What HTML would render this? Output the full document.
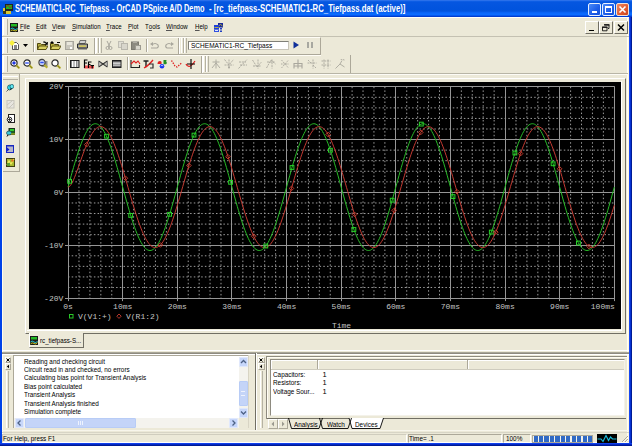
<!DOCTYPE html>
<html><head><meta charset="utf-8">
<style>
*{margin:0;padding:0;box-sizing:border-box}
html,body{width:632px;height:446px;overflow:hidden;background:#ECE9D8;font-family:"Liberation Sans",sans-serif;position:relative}
.a{position:absolute}
.t{position:absolute;white-space:nowrap;font-size:7.6px;color:#000;line-height:1;transform-origin:0 0}
#title{left:0;top:0;width:632px;height:17px;background:linear-gradient(#2A70EA 0px,#2A70EA 1px,#1060E6 1px,#0556E0 2.5px,#0053DD 11px,#0862F4 12.5px,#0A6CFF 14px,#0A6AFF 15px,#0046DC 16px,#0034C4 17px)}
.tt{top:4px;color:#fff;font-weight:bold;font-size:10px}
.bdr{background:#0A4DE6}
.gv{position:absolute;width:3px;border-left:1px solid #fff;border-right:1px solid #B5B2A3}
.gr{position:absolute;width:5px;border-left:1px solid #fff;border-right:1px solid #B5B2A3;background:#F2F0E6}
.gr2{position:absolute;width:6px;background:linear-gradient(90deg,#fff 0 1px,#ECE9D8 1px 2px,#B5B2A3 2px 3px,#fff 3px 4px,#ECE9D8 4px 5px,#B5B2A3 5px 6px)}
.sv{position:absolute;width:2px;border-left:1px solid #ACA899;border-right:1px solid #fff}
.eh{position:absolute;height:2px;border-top:1px solid #ACA899;border-bottom:1px solid #fff}
.btn{position:absolute;border-top:1px solid #fff;border-left:1px solid #fff;border-right:1px solid #716F64;border-bottom:1px solid #716F64;background:#ECE9D8}
.sunk{position:absolute;border-top:1px solid #ACA899;border-left:1px solid #ACA899;border-right:1px solid #fff;border-bottom:1px solid #fff}
.ic{position:absolute}
.menu .t{top:22.6px;font-size:8px;transform:scaleX(0.765)}
.menu u{text-decoration:none;border-bottom:1px solid #555;display:inline-block;line-height:7.6px}
svg text{font-family:"Liberation Mono",monospace;font-size:8px;fill:#C4C4C4}
svg .d{stroke:#9C9C9C;stroke-width:1;stroke-dasharray:1.5 2.2}
svg .s{stroke:#969696;stroke-width:1}
</style></head><body>
<!-- ===== TITLE ===== -->
<div id="title" class="a"></div>
<svg class="ic" style="left:3px;top:4px" width="10" height="10" viewBox="0 0 10 10">
<rect x="0" y="4" width="8" height="6" fill="#D8C830"/><rect x="2" y="0" width="8" height="7" fill="#222"/><rect x="3" y="1" width="6" height="4" fill="#20B020"/><path d="M3,3 L5,1 L7,4 L9,2" stroke="#B02020" fill="none" stroke-width="0.8"/><rect x="0" y="7" width="3" height="3" fill="#3a3a10"/>
</svg>
<div class="t tt" style="left:14.5px;transform:scaleX(0.737)">SCHEMATIC1-RC_Tiefpass</div>
<div class="t tt" style="left:111.7px;transform:scaleX(0.735)">- OrCAD PSpice A/D Demo</div>
<div class="t tt" style="left:209px;transform:scaleX(0.778)">- [rc_tiefpass-SCHEMATIC1-RC_Tiefpass.dat (active)]</div>
<!-- caption buttons -->
<div class="a" style="left:588px;top:3px;width:12.5px;height:12.5px;border:1px solid #E8F0FF;border-radius:2px;background:linear-gradient(135deg,#4A8AF8,#1C5CE8 60%,#1650D8)"></div>
<div class="a" style="left:591.5px;top:10.5px;width:5px;height:2px;background:#fff"></div>
<div class="a" style="left:602px;top:3px;width:12.5px;height:12.5px;border:1px solid #E8F0FF;border-radius:2px;background:linear-gradient(135deg,#4A8AF8,#1C5CE8 60%,#1650D8)"></div>
<div class="a" style="left:605px;top:6px;width:6.5px;height:6.5px;border:1px solid #fff;border-top-width:2px"></div>
<div class="a" style="left:616px;top:3px;width:12.5px;height:12.5px;border:1px solid #F0E0D8;border-radius:2px;background:linear-gradient(135deg,#F08860,#E05A30 60%,#C84820)"></div>
<svg class="ic" style="left:616px;top:3px" width="13" height="13" viewBox="0 0 13 13"><path d="M3.5,3.5 L9.5,9.5 M9.5,3.5 L3.5,9.5" stroke="#fff" stroke-width="1.6"/></svg>

<!-- window borders -->
<div class="a" style="left:0;top:17px;width:2px;height:429px;background:#0042E8"></div>
<div class="a" style="left:629px;top:17px;width:3px;height:429px;background:linear-gradient(90deg,#1848F2 0 1px,#0632D4 1px 2px,#001A94 2px 3px)"></div>
<div class="a" style="left:0;top:443px;width:632px;height:3px;background:linear-gradient(#1040EC 0 1px,#0428C0 1px 2px,#001A94 2px 3px)"></div>

<div class="a" style="left:627px;top:17px;width:2px;height:426px;background:linear-gradient(90deg,#FFFFF4 0 1px,#FFF4DA 1px 2px)"></div>
<div class="a" style="left:2px;top:17px;width:1px;height:426px;background:#FFFCEE"></div>
<!-- ===== MENU BAND ===== -->
<div class="a" style="left:2px;top:17px;width:627px;height:1px;background:#FFFFF8"></div>
<div class="gr" style="left:3px;top:19px;height:16px"></div>
<svg class="ic" style="left:10px;top:22.5px" width="8" height="9" viewBox="0 0 8 9">
<rect width="8" height="9" fill="#1a1a1a"/><rect x="1" y="1" width="6" height="2.5" fill="#22B822"/><path d="M0.5,6 Q2,4 4,6 T7.5,5" stroke="#20C8D8" fill="none" stroke-width="1"/><path d="M0.5,8 Q2,6 4,7.5 T7.5,6.5" stroke="#D8D020" fill="none" stroke-width="0.9"/>
</svg>
<div class="menu">
<div class="t" style="left:20px"><u>F</u>ile</div>
<div class="t" style="left:35.7px"><u>E</u>dit</div>
<div class="t" style="left:52px"><u>V</u>iew</div>
<div class="t" style="left:72px"><u>S</u>imulation</div>
<div class="t" style="left:106px"><u>T</u>race</div>
<div class="t" style="left:128px"><u>P</u>lot</div>
<div class="t" style="left:145px">T<u>o</u>ols</div>
<div class="t" style="left:166px"><u>W</u>indow</div>
<div class="t" style="left:195px"><u>H</u>elp</div>
</div>
<svg class="ic" style="left:214px;top:22.5px" width="9" height="9" viewBox="0 0 9 9"><rect x="4" y="0" width="5" height="4.5" fill="#1A2A9A"/><path d="M4.5,3 q2,-3 4,0" stroke="#D8D020" fill="none" stroke-width="0.8"/><rect x="0" y="2" width="5" height="4.5" fill="#2040D8"/><path d="M0.5,4.5 h4" stroke="#D8D020" stroke-width="0.8"/><rect x="0" y="6.5" width="5" height="2.5" fill="#3050E0"/><rect x="1" y="7" width="3" height="1" fill="#E0E8FF"/><rect x="6" y="5" width="2" height="1.5" fill="#2040C0"/><rect x="6" y="7.5" width="2" height="1.5" fill="#2040C0"/></svg>
<!-- MDI buttons -->
<div class="btn" style="left:585px;top:21px;width:13.5px;height:12.5px"></div>
<div class="a" style="left:588.5px;top:29.5px;width:5px;height:1.5px;background:#000"></div>
<div class="btn" style="left:599px;top:21px;width:13.5px;height:12.5px"></div>
<svg class="ic" style="left:599px;top:21px" width="14" height="13" viewBox="0 0 14 13"><path d="M5.5,4 h4.5 v3.5 h-1" stroke="#111" fill="none" stroke-width="0.9"/><rect x="5" y="3.2" width="5.5" height="1.2" fill="#111"/><path d="M3.5,6.2 h4.5 v3.6 h-4.5 z" stroke="#111" fill="#ECE9D8" stroke-width="0.9"/><rect x="3" y="5.6" width="5.5" height="1.2" fill="#111"/></svg>
<div class="btn" style="left:613.5px;top:21px;width:14px;height:12.5px"></div>
<svg class="ic" style="left:613.5px;top:21px" width="14" height="13" viewBox="0 0 14 13"><path d="M4,3.5 L10,9.5 M10,3.5 L4,9.5" stroke="#000" stroke-width="1.5"/></svg>
<div class="a" style="left:2px;top:36px;width:627px;height:1px;background:#C4C1B2"></div>

<!-- ===== TOOLBAR ROW 1 ===== -->
<div class="a" style="left:2px;top:37px;width:319px;height:18px;border-top:1px solid #FFFDF6;border-right:1px solid #ACA899;border-bottom:1px solid #ACA899"></div>
<div class="a" style="left:2px;top:55px;width:319px;height:1px;background:#FFFDF6"></div>
<div class="gr" style="left:3px;top:38px;height:15px"></div>
<div class="sv" style="left:33px;top:39px;height:13px"></div>
<div class="sv" style="left:146px;top:39px;height:13px"></div>
<div class="a" style="left:94px;top:38px;width:1px;height:16px;background:#ACA899"></div>
<div class="a" style="left:95px;top:38px;width:1px;height:16px;background:#fff"></div>
<div class="gr2" style="left:96px;top:38px;height:15px"></div>
<div class="a" style="left:178px;top:38px;width:1px;height:16px;background:#ACA899"></div>
<div class="a" style="left:179px;top:38px;width:1px;height:16px;background:#fff"></div>
<div class="gr2" style="left:181px;top:38px;height:15px"></div>
<div class="a" style="left:188px;top:40.5px;width:101px;height:9px;background:#fff;border:1px solid #C8C5B8;border-top-color:#808078;border-left-color:#808078"></div>
<div class="t" style="left:191.4px;top:41.8px;font-size:7.5px;transform:scaleX(0.87)">SCHEMATIC1-RC_Tiefpass</div>
<svg class="ic" style="left:293px;top:41px" width="7" height="8" viewBox="0 0 7 8"><path d="M0.5,0.5 L6,4 L0.5,7.5 Z" fill="#10309A"/></svg>
<div class="a" style="left:307px;top:41.5px;width:2px;height:6px;background:#A8A8A0"></div>
<div class="a" style="left:311px;top:41.5px;width:2px;height:6px;background:#A8A8A0"></div>

<!-- ===== TOOLBAR ROW 2 ===== -->
<div class="a" style="left:2px;top:55px;width:349px;height:19px;border-right:1px solid #ACA899;border-bottom:1px solid #ACA899"></div>
<div class="gr" style="left:3px;top:56px;height:16px"></div>
<div class="sv" style="left:66px;top:57px;height:13px"></div>
<div class="sv" style="left:127px;top:57px;height:13px"></div>
<div class="a" style="left:201px;top:56px;width:1px;height:17px;background:#ACA899"></div>
<div class="a" style="left:202px;top:56px;width:1px;height:17px;background:#fff"></div>
<div class="gr2" style="left:203px;top:56px;height:16px"></div>
<svg class="ic" style="left:9px;top:40px" width="10" height="10" viewBox="0 0 10 10"><path d="M3.5,2.5 h4 l2,2 v5 h-6 z" fill="#fff" stroke="#555" stroke-width="1"/><rect x="5" y="5" width="3" height="4" fill="#888"/><circle cx="3" cy="3" r="2.2" fill="#F8F040"/><path d="M3,0 v6 M0,3 h6" stroke="#F8F040" stroke-width="0.8"/></svg>
<svg class="ic" style="left:23px;top:44px" width="5" height="3" viewBox="0 0 5 3"><path d="M0,0 h5 l-2.5,3 z" fill="#000"/></svg>
<svg class="ic" style="left:37px;top:41px" width="11" height="9" viewBox="0 0 11 9"><path d="M0.5,2.5 h3 l1,1 h4 v5 h-8 z" fill="#B8B040" stroke="#504810" stroke-width="1"/><path d="M2,5 h9 l-2,3.5 h-8.5 z" fill="#D8D060" stroke="#504810" stroke-width="0.9"/><path d="M6,1 q2,-1 3.5,1 l1,-1 v2.5 h-2.5 l1,-1" fill="#000" stroke="#000" stroke-width="0.6"/></svg>
<svg class="ic" style="left:50px;top:41px" width="11" height="9" viewBox="0 0 11 9"><path d="M0.5,2.5 h3 l1,1 h4 v5 h-8 z" fill="#B8B040" stroke="#504810" stroke-width="1"/><path d="M2,5 h9 l-2,3.5 h-8.5 z" fill="#D8D060" stroke="#504810" stroke-width="0.9"/><path d="M2,0 v3 M0.5,1.5 h3" stroke="#000" stroke-width="1"/><path d="M7,1.5 h3" stroke="#000" stroke-width="1"/></svg>
<svg class="ic" style="left:65px;top:41px" width="9" height="9" viewBox="0 0 9 9"><rect x="0.5" y="0.5" width="8" height="8" fill="#C8C6BC" stroke="#A8A69C"/><rect x="2" y="1" width="5" height="3" fill="#E8E6DC"/><rect x="5" y="6" width="2" height="2" fill="#fff"/></svg>
<svg class="ic" style="left:77px;top:40px" width="11" height="10" viewBox="0 0 11 10"><path d="M3,0.5 h6 l-1,3 h-6 z" fill="#D0D0D0" stroke="#555" stroke-width="0.8"/><path d="M0.5,4 h10 v4 h-10 z" fill="#A0A0A0" stroke="#303030" stroke-width="1"/><rect x="2" y="5.5" width="7" height="1.2" fill="#E0D040"/><rect x="1" y="8" width="9" height="1.5" fill="#606060"/></svg>
<svg class="ic" style="left:105px;top:41px" width="8" height="9" viewBox="0 0 8 9"><path d="M2,0 L5,6 M6,0 L3,6" stroke="#A8A69C" stroke-width="1"/><circle cx="2.5" cy="7" r="1.5" fill="none" stroke="#A8A69C"/><circle cx="5.5" cy="7" r="1.5" fill="none" stroke="#A8A69C"/></svg>
<svg class="ic" style="left:118px;top:41px" width="10" height="9" viewBox="0 0 10 9"><rect x="0.5" y="0.5" width="5" height="6" fill="#E0DED4" stroke="#C0BEB4"/><rect x="3.5" y="2.5" width="6" height="6" fill="#D8D6CC" stroke="#B8B6AC"/></svg>
<svg class="ic" style="left:131px;top:41px" width="10" height="9" viewBox="0 0 10 9"><rect x="0.5" y="1" width="7" height="7.5" fill="#8C8A80" stroke="#7C7A70"/><rect x="2" y="0" width="4" height="2" fill="#B0AEA4"/><rect x="4.5" y="4.5" width="5" height="4.5" fill="#D8D6CC" stroke="#9C9A90"/></svg>
<svg class="ic" style="left:150px;top:42px" width="10" height="7" viewBox="0 0 10 7"><path d="M2,3 q3,-3 6,0 q1,2 -1,3 h-6" fill="none" stroke="#A8A69C" stroke-width="1.1"/><path d="M0,2 l3,-2 v4 z" fill="#A8A69C"/></svg>
<svg class="ic" style="left:164px;top:42px" width="10" height="7" viewBox="0 0 10 7"><path d="M8,3 q-3,-3 -6,0 q-1,2 1,3 h6" fill="none" stroke="#A8A69C" stroke-width="1.1"/><path d="M10,2 l-3,-2 v4 z" fill="#A8A69C"/></svg>
<svg class="ic" style="left:9.6px;top:59.1px" width="11" height="11" viewBox="0 0 11 11"><circle cx="4" cy="4" r="3.1" fill="#fff" stroke="#2A2A2A" stroke-width="1.2"/><path d="M2.3,4 h3.4 M4,2.3 v3.4" stroke="#1028E0" stroke-width="1.3"/><path d="M6.3,6.3 L9.3,9.3" stroke="#B8B030" stroke-width="2.2"/><path d="M6.6,6.6 L9.3,9.3" stroke="#606010" stroke-width="0.5"/></svg>
<svg class="ic" style="left:23.4px;top:59.1px" width="11" height="11" viewBox="0 0 11 11"><circle cx="4" cy="4" r="3.1" fill="#fff" stroke="#2A2A2A" stroke-width="1.2"/><path d="M2.2,4 h3.6" stroke="#3050F0" stroke-width="1.4"/><path d="M6.3,6.3 L9.3,9.3" stroke="#B8B030" stroke-width="2.2"/><path d="M6.6,6.6 L9.3,9.3" stroke="#606010" stroke-width="0.5"/></svg>
<svg class="ic" style="left:38px;top:58px" width="10" height="11" viewBox="0 0 10 11"><rect x="3.5" y="3" width="6" height="6" fill="#909090"/><circle cx="4" cy="4.5" r="3.1" fill="#C0CCF8" stroke="#404040" stroke-width="1.1"/><path d="M2.3,4.5 h3.4" stroke="#3050F0" stroke-width="1.3"/><path d="M6.3,6.8 L9.3,9.8" stroke="#B8B030" stroke-width="2.2"/></svg>
<svg class="ic" style="left:50.9px;top:59px" width="11" height="11" viewBox="0 0 11 11"><circle cx="4" cy="4" r="3.1" fill="#fff" stroke="#2A2A2A" stroke-width="1.2"/><path d="M6.3,6.3 L9.3,9.3" stroke="#B8B030" stroke-width="2.2"/><path d="M6.6,6.6 L9.3,9.3" stroke="#606010" stroke-width="0.5"/></svg>
<svg class="ic" style="left:70px;top:60px" width="10" height="8" viewBox="0 0 10 8"><rect x="0.5" y="0.5" width="8.5" height="7" fill="#808080" stroke="#202020"/><rect x="2" y="1" width="1.5" height="6" fill="#fff"/><rect x="4.5" y="1" width="1.5" height="6" fill="#fff"/><rect x="6.8" y="1" width="1.5" height="6" fill="#C0C0C0"/></svg>
<svg class="ic" style="left:83px;top:59px" width="11" height="10" viewBox="0 0 11 10"><rect x="1" y="6.5" width="10" height="3" fill="#F05050"/><path d="M1.5,9 v-8 h3 M1.5,4 h2.5 M5.5,9 v-6 h3 M5.5,5.5 h2 M7.5,6.5 h3.5 M9.2,6.5 v3" stroke="#000" stroke-width="1.2" fill="none"/></svg>
<svg class="ic" style="left:98px;top:60px" width="10" height="8" viewBox="0 0 10 8"><path d="M0.5,1 L9.5,7 M0.5,7 L9.5,1" stroke="#303030" stroke-width="1.2"/><path d="M0.5,2 v4 M9.5,2 v4" stroke="#808080" stroke-width="1.5"/><path d="M2,2.5 v3 M8,2.5 v3" stroke="#A0A0A0" stroke-width="1"/></svg>
<svg class="ic" style="left:112px;top:60px" width="10" height="8" viewBox="0 0 10 8"><rect x="0.5" y="0.5" width="8.5" height="7" fill="#606060" stroke="#202020"/><rect x="1" y="2.5" width="7.5" height="1.2" fill="#fff"/><rect x="1" y="4.5" width="7.5" height="1.2" fill="#E0E0E0"/></svg>
<svg class="ic" style="left:130px;top:59px" width="11" height="10" viewBox="0 0 11 10"><path d="M1,9 V1 M1,8.5 h9 M9.5,9 v-3" stroke="#202020" stroke-width="1.1" fill="none"/><path d="M1,5 L4,2 L6,4 L8,2 L10,5" stroke="#E02020" stroke-width="1.1" fill="none"/></svg>
<svg class="ic" style="left:143px;top:59px" width="11" height="10" viewBox="0 0 11 10"><path d="M0.5,2 h5 M3,2 v6" stroke="#202020" stroke-width="1.4"/><path d="M1,9 Q5,7 10,1" stroke="#E02020" stroke-width="1.3" fill="none"/><path d="M6,5 h4 v4 h-3" stroke="#303030" stroke-width="1.2" fill="none"/></svg>
<svg class="ic" style="left:157px;top:59px" width="11" height="10" viewBox="0 0 11 10"><circle cx="5" cy="7.3" r="2.3" fill="#1030F0"/><path d="M4,7.3 a1,1 0 1,1 2,0" stroke="#fff" stroke-width="0.7" fill="none"/><path d="M0.5,5 q0,-3 2.5,-3 q2,0 1.5,3 z" fill="#E02020"/><path d="M6.5,1 h2.5 q1.5,0.5 0,2 q1.8,0.5 0,2.3 h-2.5 z" fill="#209020"/></svg>
<svg class="ic" style="left:171px;top:60px" width="11" height="8" viewBox="0 0 11 8"><path d="M0.5,0.5 L4,6 L6,7 L10.5,3" stroke="#E02020" stroke-width="1.3" fill="none" stroke-dasharray="1.4 1.2"/></svg>
<svg class="ic" style="left:185px;top:59px" width="11" height="10" viewBox="0 0 11 10"><path d="M1,5 Q4,11 10,2" stroke="#E02020" stroke-width="1.3" fill="none"/><path d="M6,0 v10 M2,5 h8" stroke="#000" stroke-width="1.1"/></svg>
<svg class="ic" style="left:210.5px;top:59px" width="10" height="10" viewBox="0 0 10 10"><path d="M5,0.5 v9 M1.5,3 h7 M5,4 L1,9 M5,4 L9,9" stroke="#A9A79D" stroke-width="0.9" fill="none"/></svg>
<svg class="ic" style="left:224.3px;top:59px" width="10" height="10" viewBox="0 0 10 10"><path d="M0.5,0.5 L5,6 L9.5,0.5 M5,0.5 v8 M0.5,6 h9" stroke="#A9A79D" stroke-width="0.9" fill="none" stroke-dasharray="2 0.8"/><circle cx="5" cy="8.5" r="1" fill="#A9A79D"/></svg>
<svg class="ic" style="left:238.1px;top:59px" width="10" height="10" viewBox="0 0 10 10"><path d="M0.5,9.5 L9,0.5 M1,3 h7 M2,6 h7" stroke="#A9A79D" stroke-width="0.9" fill="none" stroke-dasharray="2.2 0.8"/></svg>
<svg class="ic" style="left:251.9px;top:59px" width="10" height="10" viewBox="0 0 10 10"><path d="M0.5,1 L5,8 L9.5,3 M6,0.5 v9 M1,7 h8" stroke="#A9A79D" stroke-width="0.9" fill="none" stroke-dasharray="2 0.8"/></svg>
<svg class="ic" style="left:265.7px;top:59px" width="10" height="10" viewBox="0 0 10 10"><path d="M0.5,9 L5,1 L9.5,5 M6,0.5 v9 M1,3 h8" stroke="#A9A79D" stroke-width="0.9" fill="none" stroke-dasharray="2 0.8"/></svg>
<svg class="ic" style="left:279.5px;top:59px" width="10" height="10" viewBox="0 0 10 10"><path d="M1.5,1 L8.5,9 M1.5,9 L8.5,1 M1,5 h8" stroke="#A9A79D" stroke-width="0.9" fill="none" stroke-dasharray="1.5 1"/></svg>
<svg class="ic" style="left:293.3px;top:59px" width="10" height="10" viewBox="0 0 10 10"><path d="M1,9.5 v-5 h8 v5 M5,0.5 v9 M1,7 h8" stroke="#A9A79D" stroke-width="1.1" fill="none"/></svg>
<svg class="ic" style="left:307.1px;top:59px" width="10" height="10" viewBox="0 0 10 10"><path d="M0.5,4 h9 M6,0.5 v9 M1,1 L4,4 M9,9 L6,6" stroke="#A9A79D" stroke-width="0.9" fill="none" stroke-dasharray="2 0.8"/></svg>
<svg class="ic" style="left:320.9px;top:59px" width="10" height="10" viewBox="0 0 10 10"><path d="M0.5,2 h9 M0.5,6 h9 M3,0.5 v9 M7,0.5 v9" stroke="#A9A79D" stroke-width="0.9" fill="none" stroke-dasharray="2 0.8"/></svg>
<svg class="ic" style="left:334.7px;top:59px" width="10" height="10" viewBox="0 0 10 10"><path d="M0.5,9.5 L5,5 L9.5,8 M5,5 L7,1.5 M6,1 a1.5,1.5 0 1,1 3,0.5" stroke="#A9A79D" stroke-width="0.9" fill="none"/></svg>
<svg class="ic" style="left:6px;top:84px" width="8" height="8" viewBox="0 0 8 8"><ellipse cx="3.5" cy="3.5" rx="2" ry="2.5" fill="#30D8E8" stroke="#105060" stroke-width="0.7"/><ellipse cx="5.8" cy="2.5" rx="1.8" ry="2.2" fill="#60E8F0" stroke="#105060" stroke-width="0.7"/><path d="M4,5 L6,4 L5,6 z" fill="#000"/><path d="M3,5 L0.5,7.5" stroke="#404040" stroke-width="0.8"/></svg>
<svg class="ic" style="left:5.5px;top:100px" width="9" height="9" viewBox="0 0 9 9"><rect x="1" y="0.5" width="7" height="7.5" fill="#E8E6E0" stroke="#C8C6BC"/><path d="M1,5 L6,1 M3,8 L8,3" stroke="#C8C6BC"/></svg>
<svg class="ic" style="left:5.5px;top:113.5px" width="9" height="9" viewBox="0 0 9 9"><rect x="2.5" y="0.5" width="6" height="8" fill="#fff" stroke="#202020"/><circle cx="3.5" cy="5.5" r="2.3" fill="#fff" stroke="#202020" stroke-width="1"/><path d="M3.5,4 v3 M2,5.5 h3" stroke="#202020" stroke-width="0.8"/></svg>
<svg class="ic" style="left:5.5px;top:128px" width="9" height="9" viewBox="0 0 9 9"><rect x="3" y="0.5" width="6" height="6" fill="#206020" stroke="#203020"/><rect x="4" y="1" width="4" height="2" fill="#30D030"/><ellipse cx="3" cy="5" rx="2.5" ry="2" fill="#40C8D8" stroke="#104050" stroke-width="0.7"/><path d="M5,6 h4" stroke="#D0D020" stroke-width="1"/><path d="M2,7 L1,8.5" stroke="#000"/></svg>
<svg class="ic" style="left:6px;top:145px" width="8" height="8" viewBox="0 0 8 8"><rect x="0.5" y="0.5" width="7" height="7" fill="#B8B8C8" stroke="#1828C0" stroke-width="1"/><rect x="0" y="0" width="8" height="1.5" fill="#1828C0"/><path d="M0.5,2 L3.5,4.5 L0.5,7 z" fill="#1020D0"/></svg>
<svg class="ic" style="left:5.5px;top:158px" width="9" height="9" viewBox="0 0 9 9"><rect x="0.5" y="0.5" width="8" height="8" fill="#A8B830" stroke="#404010"/><path d="M1,7 L3,3 L5,6 L8,1" stroke="#F0F060" stroke-width="1.2" fill="none"/><circle cx="6.5" cy="2.5" r="1.2" fill="#E07020"/><rect x="1" y="5" width="3" height="3" fill="#60A030"/></svg>
<!-- ===== LEFT TOOLBAR ===== -->
<div class="a" style="left:3px;top:74px;width:17px;height:98px;border-right:1px solid #ACA899;border-bottom:1px solid #ACA899"></div>
<div class="a" style="left:3px;top:76px;width:15px;height:4px;border-top:1px solid #fff;border-bottom:1px solid #B5B2A3"></div>

<!-- ===== MDI CHILD FRAME ===== -->
<div class="a" style="left:2px;top:73px;width:626px;height:1px;background:#B8B5A6"></div>
<div class="a" style="left:20px;top:74px;width:608px;height:1px;background:#FDFCF6"></div>
<div class="a" style="left:25px;top:78px;width:601px;height:256px;border-top:1px solid #fff;border-left:1px solid #fff;border-right:1px solid #716F64;border-bottom:1px solid #716F64"></div>
<div class="a" style="left:27px;top:81px;width:595px;height:250px;border-right:1px solid #fff;border-bottom:1px solid #fff"></div>
<!-- plot -->
<div class="a" style="left:29px;top:82px;width:592px;height:247px;background:#000"></div>
<svg class="a" style="left:0;top:0" width="632" height="446" viewBox="0 0 632 446">
<clipPath id="pc"><rect x="29" y="82" width="592" height="247"/></clipPath>
<g clip-path="url(#pc)">
<line x1="68.0" y1="287.49" x2="614.3" y2="287.49" class="d"/>
<line x1="68.0" y1="276.93" x2="614.3" y2="276.93" class="d"/>
<line x1="68.0" y1="266.36" x2="614.3" y2="266.36" class="d"/>
<line x1="68.0" y1="255.80" x2="614.3" y2="255.80" class="d"/>
<line x1="68.0" y1="234.66" x2="614.3" y2="234.66" class="d"/>
<line x1="68.0" y1="224.10" x2="614.3" y2="224.10" class="d"/>
<line x1="68.0" y1="213.53" x2="614.3" y2="213.53" class="d"/>
<line x1="68.0" y1="202.97" x2="614.3" y2="202.97" class="d"/>
<line x1="68.0" y1="181.83" x2="614.3" y2="181.83" class="d"/>
<line x1="68.0" y1="171.27" x2="614.3" y2="171.27" class="d"/>
<line x1="68.0" y1="160.70" x2="614.3" y2="160.70" class="d"/>
<line x1="68.0" y1="150.14" x2="614.3" y2="150.14" class="d"/>
<line x1="68.0" y1="129.00" x2="614.3" y2="129.00" class="d"/>
<line x1="68.0" y1="118.44" x2="614.3" y2="118.44" class="d"/>
<line x1="68.0" y1="107.87" x2="614.3" y2="107.87" class="d"/>
<line x1="68.0" y1="97.31" x2="614.3" y2="97.31" class="d"/>
<line x1="78.97" y1="86.7" x2="78.97" y2="298.1" class="d"/>
<line x1="89.90" y1="86.7" x2="89.90" y2="298.1" class="d"/>
<line x1="100.83" y1="86.7" x2="100.83" y2="298.1" class="d"/>
<line x1="111.75" y1="86.7" x2="111.75" y2="298.1" class="d"/>
<line x1="133.60" y1="86.7" x2="133.60" y2="298.1" class="d"/>
<line x1="144.53" y1="86.7" x2="144.53" y2="298.1" class="d"/>
<line x1="155.45" y1="86.7" x2="155.45" y2="298.1" class="d"/>
<line x1="166.38" y1="86.7" x2="166.38" y2="298.1" class="d"/>
<line x1="188.23" y1="86.7" x2="188.23" y2="298.1" class="d"/>
<line x1="199.15" y1="86.7" x2="199.15" y2="298.1" class="d"/>
<line x1="210.07" y1="86.7" x2="210.07" y2="298.1" class="d"/>
<line x1="221.00" y1="86.7" x2="221.00" y2="298.1" class="d"/>
<line x1="242.85" y1="86.7" x2="242.85" y2="298.1" class="d"/>
<line x1="253.78" y1="86.7" x2="253.78" y2="298.1" class="d"/>
<line x1="264.70" y1="86.7" x2="264.70" y2="298.1" class="d"/>
<line x1="275.62" y1="86.7" x2="275.62" y2="298.1" class="d"/>
<line x1="297.48" y1="86.7" x2="297.48" y2="298.1" class="d"/>
<line x1="308.40" y1="86.7" x2="308.40" y2="298.1" class="d"/>
<line x1="319.32" y1="86.7" x2="319.32" y2="298.1" class="d"/>
<line x1="330.25" y1="86.7" x2="330.25" y2="298.1" class="d"/>
<line x1="352.10" y1="86.7" x2="352.10" y2="298.1" class="d"/>
<line x1="363.03" y1="86.7" x2="363.03" y2="298.1" class="d"/>
<line x1="373.95" y1="86.7" x2="373.95" y2="298.1" class="d"/>
<line x1="384.88" y1="86.7" x2="384.88" y2="298.1" class="d"/>
<line x1="406.73" y1="86.7" x2="406.73" y2="298.1" class="d"/>
<line x1="417.65" y1="86.7" x2="417.65" y2="298.1" class="d"/>
<line x1="428.58" y1="86.7" x2="428.58" y2="298.1" class="d"/>
<line x1="439.50" y1="86.7" x2="439.50" y2="298.1" class="d"/>
<line x1="461.35" y1="86.7" x2="461.35" y2="298.1" class="d"/>
<line x1="472.28" y1="86.7" x2="472.28" y2="298.1" class="d"/>
<line x1="483.20" y1="86.7" x2="483.20" y2="298.1" class="d"/>
<line x1="494.13" y1="86.7" x2="494.13" y2="298.1" class="d"/>
<line x1="515.98" y1="86.7" x2="515.98" y2="298.1" class="d"/>
<line x1="526.90" y1="86.7" x2="526.90" y2="298.1" class="d"/>
<line x1="537.83" y1="86.7" x2="537.83" y2="298.1" class="d"/>
<line x1="548.75" y1="86.7" x2="548.75" y2="298.1" class="d"/>
<line x1="570.60" y1="86.7" x2="570.60" y2="298.1" class="d"/>
<line x1="581.52" y1="86.7" x2="581.52" y2="298.1" class="d"/>
<line x1="592.45" y1="86.7" x2="592.45" y2="298.1" class="d"/>
<line x1="603.38" y1="86.7" x2="603.38" y2="298.1" class="d"/>
<line x1="65.0" y1="298.50" x2="614.8" y2="298.50" class="s"/>
<line x1="65.0" y1="245.50" x2="614.8" y2="245.50" class="s"/>
<line x1="65.0" y1="192.50" x2="614.8" y2="192.50" class="s"/>
<line x1="65.0" y1="139.50" x2="614.8" y2="139.50" class="s"/>
<line x1="65.0" y1="86.50" x2="614.8" y2="86.50" class="s"/>
<line x1="68.50" y1="86.7" x2="68.50" y2="301.1" class="s"/>
<line x1="122.50" y1="86.7" x2="122.50" y2="301.1" class="s"/>
<line x1="177.50" y1="86.7" x2="177.50" y2="301.1" class="s"/>
<line x1="231.50" y1="86.7" x2="231.50" y2="301.1" class="s"/>
<line x1="286.50" y1="86.7" x2="286.50" y2="301.1" class="s"/>
<line x1="341.50" y1="86.7" x2="341.50" y2="301.1" class="s"/>
<line x1="395.50" y1="86.7" x2="395.50" y2="301.1" class="s"/>
<line x1="450.50" y1="86.7" x2="450.50" y2="301.1" class="s"/>
<line x1="505.50" y1="86.7" x2="505.50" y2="301.1" class="s"/>
<line x1="559.50" y1="86.7" x2="559.50" y2="301.1" class="s"/>
<line x1="614.50" y1="86.7" x2="614.50" y2="301.1" class="s"/>
<text x="63.3" y="300.6" text-anchor="end">-20V</text>
<text x="63.3" y="247.7" text-anchor="end">-10V</text>
<text x="63.3" y="194.9" text-anchor="end">0V</text>
<text x="63.3" y="142.1" text-anchor="end">10V</text>
<text x="63.3" y="89.2" text-anchor="end">20V</text>
<text x="68.0" y="309.0" text-anchor="middle">0s</text>
<text x="122.7" y="309.0" text-anchor="middle">10ms</text>
<text x="177.3" y="309.0" text-anchor="middle">20ms</text>
<text x="231.9" y="309.0" text-anchor="middle">30ms</text>
<text x="286.6" y="309.0" text-anchor="middle">40ms</text>
<text x="341.2" y="309.0" text-anchor="middle">50ms</text>
<text x="395.8" y="309.0" text-anchor="middle">60ms</text>
<text x="450.4" y="309.0" text-anchor="middle">70ms</text>
<text x="505.1" y="309.0" text-anchor="middle">80ms</text>
<text x="559.7" y="309.0" text-anchor="middle">90ms</text>
<text x="614.8" y="309.0" text-anchor="end">100ms</text>
<text x="341.5" y="327.5" text-anchor="middle">Time</text>
<path d="M68.05,187.12 L69.14,183.14 L70.23,179.17 L71.33,175.24 L72.42,171.35 L73.51,167.53 L74.61,163.78 L75.70,160.12 L76.79,156.58 L77.88,153.15 L78.97,149.85 L80.07,146.71 L81.16,143.72 L82.25,140.90 L83.34,138.27 L84.44,135.83 L85.53,133.59 L86.62,131.56 L87.72,129.75 L88.81,128.17 L89.90,126.82 L90.99,125.71 L92.09,124.84 L93.18,124.22 L94.27,123.85 L95.36,123.72 L96.45,123.85 L97.55,124.22 L98.64,124.84 L99.73,125.71 L100.83,126.82 L101.92,128.17 L103.01,129.75 L104.10,131.56 L105.19,133.59 L106.29,135.83 L107.38,138.27 L108.47,140.90 L109.56,143.72 L110.66,146.71 L111.75,149.85 L112.84,153.15 L113.94,156.58 L115.03,160.12 L116.12,163.78 L117.21,167.53 L118.31,171.35 L119.40,175.24 L120.49,179.17 L121.58,183.14 L122.67,187.12 L123.77,191.10 L124.86,195.06 L125.95,199.00 L127.05,202.88 L128.14,206.71 L129.23,210.45 L130.32,214.11 L131.42,217.66 L132.51,221.09 L133.60,224.38 L134.69,227.53 L135.78,230.51 L136.88,233.33 L137.97,235.96 L139.06,238.41 L140.16,240.64 L141.25,242.67 L142.34,244.48 L143.43,246.06 L144.53,247.41 L145.62,248.52 L146.71,249.39 L147.80,250.01 L148.90,250.39 L149.99,250.51 L151.08,250.39 L152.17,250.01 L153.27,249.39 L154.36,248.52 L155.45,247.41 L156.54,246.06 L157.64,244.48 L158.73,242.67 L159.82,240.64 L160.91,238.41 L162.00,235.96 L163.10,233.33 L164.19,230.51 L165.28,227.53 L166.38,224.38 L167.47,221.09 L168.56,217.66 L169.65,214.11 L170.75,210.45 L171.84,206.71 L172.93,202.88 L174.02,199.00 L175.12,195.06 L176.21,191.10 L177.30,187.12 L178.39,183.14 L179.49,179.17 L180.58,175.24 L181.67,171.35 L182.76,167.53 L183.86,163.78 L184.95,160.12 L186.04,156.58 L187.13,153.15 L188.23,149.85 L189.32,146.71 L190.41,143.72 L191.50,140.90 L192.60,138.27 L193.69,135.83 L194.78,133.59 L195.87,131.56 L196.97,129.75 L198.06,128.17 L199.15,126.82 L200.24,125.71 L201.34,124.84 L202.43,124.22 L203.52,123.85 L204.61,123.72 L205.71,123.85 L206.80,124.22 L207.89,124.84 L208.98,125.71 L210.07,126.82 L211.17,128.17 L212.26,129.75 L213.35,131.56 L214.44,133.59 L215.54,135.83 L216.63,138.27 L217.72,140.90 L218.81,143.72 L219.91,146.71 L221.00,149.85 L222.09,153.15 L223.19,156.58 L224.28,160.12 L225.37,163.78 L226.46,167.53 L227.56,171.35 L228.65,175.24 L229.74,179.17 L230.83,183.14 L231.93,187.12 L233.02,191.10 L234.11,195.06 L235.20,199.00 L236.30,202.88 L237.39,206.71 L238.48,210.45 L239.57,214.11 L240.67,217.66 L241.76,221.09 L242.85,224.38 L243.94,227.53 L245.04,230.51 L246.13,233.33 L247.22,235.96 L248.31,238.41 L249.41,240.64 L250.50,242.67 L251.59,244.48 L252.68,246.06 L253.78,247.41 L254.87,248.52 L255.96,249.39 L257.05,250.01 L258.15,250.39 L259.24,250.51 L260.33,250.39 L261.42,250.01 L262.52,249.39 L263.61,248.52 L264.70,247.41 L265.79,246.06 L266.88,244.48 L267.98,242.67 L269.07,240.64 L270.16,238.41 L271.26,235.96 L272.35,233.33 L273.44,230.51 L274.53,227.53 L275.62,224.38 L276.72,221.09 L277.81,217.66 L278.90,214.11 L280.00,210.45 L281.09,206.71 L282.18,202.88 L283.27,199.00 L284.37,195.06 L285.46,191.10 L286.55,187.12 L287.64,183.14 L288.74,179.17 L289.83,175.24 L290.92,171.35 L292.01,167.53 L293.11,163.78 L294.20,160.12 L295.29,156.58 L296.38,153.15 L297.48,149.85 L298.57,146.71 L299.66,143.72 L300.75,140.90 L301.85,138.27 L302.94,135.83 L304.03,133.59 L305.12,131.56 L306.22,129.75 L307.31,128.17 L308.40,126.82 L309.49,125.71 L310.59,124.84 L311.68,124.22 L312.77,123.85 L313.86,123.72 L314.96,123.85 L316.05,124.22 L317.14,124.84 L318.23,125.71 L319.32,126.82 L320.42,128.17 L321.51,129.75 L322.60,131.56 L323.70,133.59 L324.79,135.83 L325.88,138.27 L326.97,140.90 L328.07,143.72 L329.16,146.71 L330.25,149.85 L331.34,153.15 L332.44,156.58 L333.53,160.12 L334.62,163.78 L335.71,167.53 L336.81,171.35 L337.90,175.24 L338.99,179.17 L340.08,183.14 L341.18,187.12 L342.27,191.10 L343.36,195.06 L344.45,199.00 L345.55,202.88 L346.64,206.71 L347.73,210.45 L348.82,214.11 L349.92,217.66 L351.01,221.09 L352.10,224.38 L353.19,227.53 L354.29,230.51 L355.38,233.33 L356.47,235.96 L357.56,238.41 L358.66,240.64 L359.75,242.67 L360.84,244.48 L361.93,246.06 L363.03,247.41 L364.12,248.52 L365.21,249.39 L366.30,250.01 L367.40,250.39 L368.49,250.51 L369.58,250.39 L370.67,250.01 L371.77,249.39 L372.86,248.52 L373.95,247.41 L375.04,246.06 L376.14,244.48 L377.23,242.67 L378.32,240.64 L379.41,238.41 L380.51,235.96 L381.60,233.33 L382.69,230.51 L383.78,227.53 L384.88,224.38 L385.97,221.09 L387.06,217.66 L388.15,214.11 L389.25,210.45 L390.34,206.71 L391.43,202.88 L392.52,199.00 L393.62,195.06 L394.71,191.10 L395.80,187.12 L396.89,183.14 L397.99,179.17 L399.08,175.24 L400.17,171.35 L401.26,167.53 L402.36,163.78 L403.45,160.12 L404.54,156.58 L405.63,153.15 L406.73,149.85 L407.82,146.71 L408.91,143.72 L410.00,140.90 L411.10,138.27 L412.19,135.83 L413.28,133.59 L414.37,131.56 L415.47,129.75 L416.56,128.17 L417.65,126.82 L418.74,125.71 L419.84,124.84 L420.93,124.22 L422.02,123.85 L423.11,123.72 L424.21,123.85 L425.30,124.22 L426.39,124.84 L427.48,125.71 L428.58,126.82 L429.67,128.17 L430.76,129.75 L431.85,131.56 L432.94,133.59 L434.04,135.83 L435.13,138.27 L436.22,140.90 L437.32,143.72 L438.41,146.71 L439.50,149.85 L440.59,153.15 L441.69,156.58 L442.78,160.12 L443.87,163.78 L444.96,167.53 L446.06,171.35 L447.15,175.24 L448.24,179.17 L449.33,183.14 L450.43,187.12 L451.52,191.10 L452.61,195.06 L453.70,199.00 L454.80,202.88 L455.89,206.71 L456.98,210.45 L458.07,214.11 L459.17,217.66 L460.26,221.09 L461.35,224.38 L462.44,227.53 L463.54,230.51 L464.63,233.33 L465.72,235.96 L466.81,238.41 L467.91,240.64 L469.00,242.67 L470.09,244.48 L471.18,246.06 L472.28,247.41 L473.37,248.52 L474.46,249.39 L475.55,250.01 L476.65,250.39 L477.74,250.51 L478.83,250.39 L479.92,250.01 L481.02,249.39 L482.11,248.52 L483.20,247.41 L484.29,246.06 L485.39,244.48 L486.48,242.67 L487.57,240.64 L488.66,238.41 L489.76,235.96 L490.85,233.33 L491.94,230.51 L493.03,227.53 L494.13,224.38 L495.22,221.09 L496.31,217.66 L497.40,214.11 L498.50,210.45 L499.59,206.71 L500.68,202.88 L501.77,199.00 L502.87,195.06 L503.96,191.10 L505.05,187.12 L506.14,183.14 L507.24,179.17 L508.33,175.24 L509.42,171.35 L510.51,167.53 L511.61,163.78 L512.70,160.12 L513.79,156.58 L514.88,153.15 L515.98,149.85 L517.07,146.71 L518.16,143.72 L519.25,140.90 L520.35,138.27 L521.44,135.83 L522.53,133.59 L523.62,131.56 L524.72,129.75 L525.81,128.17 L526.90,126.82 L527.99,125.71 L529.09,124.84 L530.18,124.22 L531.27,123.85 L532.36,123.72 L533.46,123.85 L534.55,124.22 L535.64,124.84 L536.73,125.71 L537.83,126.82 L538.92,128.17 L540.01,129.75 L541.10,131.56 L542.20,133.59 L543.29,135.83 L544.38,138.27 L545.47,140.90 L546.57,143.72 L547.66,146.71 L548.75,149.85 L549.84,153.15 L550.94,156.58 L552.03,160.12 L553.12,163.78 L554.21,167.53 L555.31,171.35 L556.40,175.24 L557.49,179.17 L558.58,183.14 L559.68,187.12 L560.77,191.10 L561.86,195.06 L562.95,199.00 L564.05,202.88 L565.14,206.71 L566.23,210.45 L567.32,214.11 L568.42,217.66 L569.51,221.09 L570.60,224.38 L571.69,227.53 L572.79,230.51 L573.88,233.33 L574.97,235.96 L576.06,238.41 L577.16,240.64 L578.25,242.67 L579.34,244.48 L580.43,246.06 L581.52,247.41 L582.62,248.52 L583.71,249.39 L584.80,250.01 L585.90,250.39 L586.99,250.51 L588.08,250.39 L589.17,250.01 L590.26,249.39 L591.36,248.52 L592.45,247.41 L593.54,246.06 L594.63,244.48 L595.73,242.67 L596.82,240.64 L597.91,238.41 L599.00,235.96 L600.10,233.33 L601.19,230.51 L602.28,227.53 L603.38,224.38 L604.47,221.09 L605.56,217.66 L606.65,214.11 L607.75,210.45 L608.84,206.71 L609.93,202.88 L611.02,199.00 L612.12,195.06 L613.21,191.10 L614.30,187.12" fill="none" stroke="#28BC28" stroke-width="1"/>
<path d="M68.05,187.12 L69.14,186.74 L70.23,185.72 L71.33,184.16 L72.42,182.18 L73.51,179.86 L74.61,177.27 L75.70,174.48 L76.79,171.54 L77.88,168.51 L78.97,165.41 L80.07,162.30 L81.16,159.19 L82.25,156.12 L83.34,153.11 L84.44,150.19 L85.53,147.37 L86.62,144.68 L87.72,142.13 L88.81,139.74 L89.90,137.51 L90.99,135.46 L92.09,133.61 L93.18,131.96 L94.27,130.52 L95.36,129.29 L96.45,128.29 L97.55,127.52 L98.64,126.97 L99.73,126.67 L100.83,126.59 L101.92,126.76 L103.01,127.16 L104.10,127.80 L105.19,128.67 L106.29,129.76 L107.38,131.09 L108.47,132.63 L109.56,134.39 L110.66,136.36 L111.75,138.53 L112.84,140.89 L113.94,143.43 L115.03,146.14 L116.12,149.02 L117.21,152.04 L118.31,155.21 L119.40,158.50 L120.49,161.90 L121.58,165.40 L122.67,168.99 L123.77,172.65 L124.86,176.36 L125.95,180.12 L127.05,183.91 L128.14,187.71 L129.23,191.50 L130.32,195.28 L131.42,199.03 L132.51,202.73 L133.60,206.37 L134.69,209.93 L135.78,213.40 L136.88,216.77 L137.97,220.02 L139.06,223.14 L140.16,226.12 L141.25,228.95 L142.34,231.61 L143.43,234.09 L144.53,236.39 L145.62,238.50 L146.71,240.40 L147.80,242.09 L148.90,243.57 L149.99,244.82 L151.08,245.84 L152.17,246.64 L153.27,247.19 L154.36,247.51 L155.45,247.60 L156.54,247.44 L157.64,247.04 L158.73,246.41 L159.82,245.55 L160.91,244.45 L162.00,243.13 L163.10,241.59 L164.19,239.83 L165.28,237.86 L166.38,235.70 L167.47,233.34 L168.56,230.80 L169.65,228.09 L170.75,225.21 L171.84,222.19 L172.93,219.02 L174.02,215.74 L175.12,212.33 L176.21,208.83 L177.30,205.24 L178.39,201.59 L179.49,197.87 L180.58,194.11 L181.67,190.33 L182.76,186.53 L183.86,182.73 L184.95,178.95 L186.04,175.20 L187.13,171.50 L188.23,167.87 L189.32,164.30 L190.41,160.83 L191.50,157.46 L192.60,154.21 L193.69,151.09 L194.78,148.11 L195.87,145.29 L196.97,142.63 L198.06,140.14 L199.15,137.84 L200.24,135.74 L201.34,133.83 L202.43,132.14 L203.52,130.67 L204.61,129.42 L205.71,128.39 L206.80,127.60 L207.89,127.04 L208.98,126.72 L210.07,126.64 L211.17,126.79 L212.26,127.19 L213.35,127.82 L214.44,128.69 L215.54,129.78 L216.63,131.10 L217.72,132.65 L218.81,134.40 L219.91,136.37 L221.00,138.54 L222.09,140.89 L223.19,143.43 L224.28,146.15 L225.37,149.02 L226.46,152.05 L227.56,155.21 L228.65,158.50 L229.74,161.90 L230.83,165.40 L231.93,168.99 L233.02,172.65 L234.11,176.36 L235.20,180.12 L236.30,183.91 L237.39,187.71 L238.48,191.50 L239.57,195.28 L240.67,199.03 L241.76,202.73 L242.85,206.37 L243.94,209.93 L245.04,213.40 L246.13,216.77 L247.22,220.02 L248.31,223.14 L249.41,226.12 L250.50,228.95 L251.59,231.61 L252.68,234.09 L253.78,236.39 L254.87,238.50 L255.96,240.40 L257.05,242.09 L258.15,243.57 L259.24,244.82 L260.33,245.84 L261.42,246.64 L262.52,247.19 L263.61,247.51 L264.70,247.60 L265.79,247.44 L266.88,247.04 L267.98,246.41 L269.07,245.55 L270.16,244.45 L271.26,243.13 L272.35,241.59 L273.44,239.83 L274.53,237.86 L275.62,235.70 L276.72,233.34 L277.81,230.80 L278.90,228.09 L280.00,225.21 L281.09,222.19 L282.18,219.02 L283.27,215.74 L284.37,212.33 L285.46,208.83 L286.55,205.24 L287.64,201.59 L288.74,197.87 L289.83,194.11 L290.92,190.33 L292.01,186.53 L293.11,182.73 L294.20,178.95 L295.29,175.20 L296.38,171.50 L297.48,167.87 L298.57,164.30 L299.66,160.83 L300.75,157.46 L301.85,154.21 L302.94,151.09 L304.03,148.11 L305.12,145.29 L306.22,142.63 L307.31,140.14 L308.40,137.84 L309.49,135.74 L310.59,133.83 L311.68,132.14 L312.77,130.67 L313.86,129.42 L314.96,128.39 L316.05,127.60 L317.14,127.04 L318.23,126.72 L319.32,126.64 L320.42,126.79 L321.51,127.19 L322.60,127.82 L323.70,128.69 L324.79,129.78 L325.88,131.10 L326.97,132.65 L328.07,134.40 L329.16,136.37 L330.25,138.54 L331.34,140.89 L332.44,143.43 L333.53,146.15 L334.62,149.02 L335.71,152.05 L336.81,155.21 L337.90,158.50 L338.99,161.90 L340.08,165.40 L341.18,168.99 L342.27,172.65 L343.36,176.36 L344.45,180.12 L345.55,183.91 L346.64,187.71 L347.73,191.50 L348.82,195.28 L349.92,199.03 L351.01,202.73 L352.10,206.37 L353.19,209.93 L354.29,213.40 L355.38,216.77 L356.47,220.02 L357.56,223.14 L358.66,226.12 L359.75,228.95 L360.84,231.61 L361.93,234.09 L363.03,236.39 L364.12,238.50 L365.21,240.40 L366.30,242.09 L367.40,243.57 L368.49,244.82 L369.58,245.84 L370.67,246.64 L371.77,247.19 L372.86,247.51 L373.95,247.60 L375.04,247.44 L376.14,247.04 L377.23,246.41 L378.32,245.55 L379.41,244.45 L380.51,243.13 L381.60,241.59 L382.69,239.83 L383.78,237.86 L384.88,235.70 L385.97,233.34 L387.06,230.80 L388.15,228.09 L389.25,225.21 L390.34,222.19 L391.43,219.02 L392.52,215.74 L393.62,212.33 L394.71,208.83 L395.80,205.24 L396.89,201.59 L397.99,197.87 L399.08,194.11 L400.17,190.33 L401.26,186.53 L402.36,182.73 L403.45,178.95 L404.54,175.20 L405.63,171.50 L406.73,167.87 L407.82,164.30 L408.91,160.83 L410.00,157.46 L411.10,154.21 L412.19,151.09 L413.28,148.11 L414.37,145.29 L415.47,142.63 L416.56,140.14 L417.65,137.84 L418.74,135.74 L419.84,133.83 L420.93,132.14 L422.02,130.67 L423.11,129.42 L424.21,128.39 L425.30,127.60 L426.39,127.04 L427.48,126.72 L428.58,126.64 L429.67,126.79 L430.76,127.19 L431.85,127.82 L432.94,128.69 L434.04,129.78 L435.13,131.10 L436.22,132.65 L437.32,134.40 L438.41,136.37 L439.50,138.54 L440.59,140.89 L441.69,143.43 L442.78,146.15 L443.87,149.02 L444.96,152.05 L446.06,155.21 L447.15,158.50 L448.24,161.90 L449.33,165.40 L450.43,168.99 L451.52,172.65 L452.61,176.36 L453.70,180.12 L454.80,183.91 L455.89,187.71 L456.98,191.50 L458.07,195.28 L459.17,199.03 L460.26,202.73 L461.35,206.37 L462.44,209.93 L463.54,213.40 L464.63,216.77 L465.72,220.02 L466.81,223.14 L467.91,226.12 L469.00,228.95 L470.09,231.61 L471.18,234.09 L472.28,236.39 L473.37,238.50 L474.46,240.40 L475.55,242.09 L476.65,243.57 L477.74,244.82 L478.83,245.84 L479.92,246.64 L481.02,247.19 L482.11,247.51 L483.20,247.60 L484.29,247.44 L485.39,247.04 L486.48,246.41 L487.57,245.55 L488.66,244.45 L489.76,243.13 L490.85,241.59 L491.94,239.83 L493.03,237.86 L494.13,235.70 L495.22,233.34 L496.31,230.80 L497.40,228.09 L498.50,225.21 L499.59,222.19 L500.68,219.02 L501.77,215.74 L502.87,212.33 L503.96,208.83 L505.05,205.24 L506.14,201.59 L507.24,197.87 L508.33,194.11 L509.42,190.33 L510.51,186.53 L511.61,182.73 L512.70,178.95 L513.79,175.20 L514.88,171.50 L515.98,167.87 L517.07,164.30 L518.16,160.83 L519.25,157.46 L520.35,154.21 L521.44,151.09 L522.53,148.11 L523.62,145.29 L524.72,142.63 L525.81,140.14 L526.90,137.84 L527.99,135.74 L529.09,133.83 L530.18,132.14 L531.27,130.67 L532.36,129.42 L533.46,128.39 L534.55,127.60 L535.64,127.04 L536.73,126.72 L537.83,126.64 L538.92,126.79 L540.01,127.19 L541.10,127.82 L542.20,128.69 L543.29,129.78 L544.38,131.10 L545.47,132.65 L546.57,134.40 L547.66,136.37 L548.75,138.54 L549.84,140.89 L550.94,143.43 L552.03,146.15 L553.12,149.02 L554.21,152.05 L555.31,155.21 L556.40,158.50 L557.49,161.90 L558.58,165.40 L559.68,168.99 L560.77,172.65 L561.86,176.36 L562.95,180.12 L564.05,183.91 L565.14,187.71 L566.23,191.50 L567.32,195.28 L568.42,199.03 L569.51,202.73 L570.60,206.37 L571.69,209.93 L572.79,213.40 L573.88,216.77 L574.97,220.02 L576.06,223.14 L577.16,226.12 L578.25,228.95 L579.34,231.61 L580.43,234.09 L581.52,236.39 L582.62,238.50 L583.71,240.40 L584.80,242.09 L585.90,243.57 L586.99,244.82 L588.08,245.84 L589.17,246.64 L590.26,247.19 L591.36,247.51 L592.45,247.60 L593.54,247.44 L594.63,247.04 L595.73,246.41 L596.82,245.55 L597.91,244.45 L599.00,243.13 L600.10,241.59 L601.19,239.83 L602.28,237.86 L603.38,235.70 L604.47,233.34 L605.56,230.80 L606.65,228.09 L607.75,225.21 L608.84,222.19 L609.93,219.02 L611.02,215.74 L612.12,212.33 L613.21,208.83 L614.30,205.24" fill="none" stroke="#C43A32" stroke-width="1"/>
<rect x="67.7" y="179.4" width="3.8" height="3.8" fill="none" stroke="#28D028" stroke-width="1"/>
<rect x="104.6" y="134.3" width="3.8" height="3.8" fill="none" stroke="#28D028" stroke-width="1"/>
<rect x="128.8" y="213.5" width="3.8" height="3.8" fill="none" stroke="#28D028" stroke-width="1"/>
<rect x="167.7" y="212.4" width="3.8" height="3.8" fill="none" stroke="#28D028" stroke-width="1"/>
<rect x="192.1" y="133.2" width="3.8" height="3.8" fill="none" stroke="#28D028" stroke-width="1"/>
<rect x="228.7" y="180.4" width="3.8" height="3.8" fill="none" stroke="#28D028" stroke-width="1"/>
<rect x="263.9" y="244.1" width="3.8" height="3.8" fill="none" stroke="#28D028" stroke-width="1"/>
<rect x="290.1" y="165.6" width="3.8" height="3.8" fill="none" stroke="#28D028" stroke-width="1"/>
<rect x="328.5" y="148.3" width="3.8" height="3.8" fill="none" stroke="#28D028" stroke-width="1"/>
<rect x="352.0" y="227.6" width="3.8" height="3.8" fill="none" stroke="#28D028" stroke-width="1"/>
<rect x="390.3" y="198.3" width="3.8" height="3.8" fill="none" stroke="#28D028" stroke-width="1"/>
<rect x="419.4" y="122.2" width="3.8" height="3.8" fill="none" stroke="#28D028" stroke-width="1"/>
<rect x="451.1" y="194.7" width="3.8" height="3.8" fill="none" stroke="#28D028" stroke-width="1"/>
<rect x="489.4" y="230.2" width="3.8" height="3.8" fill="none" stroke="#28D028" stroke-width="1"/>
<rect x="513.0" y="151.1" width="3.8" height="3.8" fill="none" stroke="#28D028" stroke-width="1"/>
<rect x="551.2" y="161.9" width="3.8" height="3.8" fill="none" stroke="#28D028" stroke-width="1"/>
<rect x="576.5" y="241.1" width="3.8" height="3.8" fill="none" stroke="#28D028" stroke-width="1"/>
<path d="M86.7,142.3 L89.0,144.6 L86.7,146.9 L84.4,144.6 Z" fill="none" stroke="#D04030" stroke-width="0.9"/>
<path d="M125.4,175.9 L127.7,178.2 L125.4,180.5 L123.1,178.2 Z" fill="none" stroke="#D04030" stroke-width="0.9"/>
<path d="M160.4,242.7 L162.7,245.0 L160.4,247.3 L158.1,245.0 Z" fill="none" stroke="#D04030" stroke-width="0.9"/>
<path d="M188.9,163.2 L191.2,165.5 L188.9,167.8 L186.6,165.5 Z" fill="none" stroke="#D04030" stroke-width="0.9"/>
<path d="M228.0,154.4 L230.3,156.7 L228.0,159.0 L225.7,156.7 Z" fill="none" stroke="#D04030" stroke-width="0.9"/>
<path d="M253.7,233.9 L256.0,236.2 L253.7,238.5 L251.4,236.2 Z" fill="none" stroke="#D04030" stroke-width="0.9"/>
<path d="M291.5,186.1 L293.8,188.4 L291.5,190.7 L289.2,188.4 Z" fill="none" stroke="#D04030" stroke-width="0.9"/>
<path d="M328.1,132.2 L330.4,134.5 L328.1,136.8 L325.8,134.5 Z" fill="none" stroke="#D04030" stroke-width="0.9"/>
<path d="M354.6,212.1 L356.9,214.4 L354.6,216.7 L352.3,214.4 Z" fill="none" stroke="#D04030" stroke-width="0.9"/>
<path d="M394.2,208.1 L396.5,210.4 L394.2,212.7 L391.9,210.4 Z" fill="none" stroke="#D04030" stroke-width="0.9"/>
<path d="M420.8,130.1 L423.1,132.4 L420.8,134.7 L418.5,132.4 Z" fill="none" stroke="#D04030" stroke-width="0.9"/>
<path d="M457.0,189.4 L459.3,191.7 L457.0,194.0 L454.7,191.7 Z" fill="none" stroke="#D04030" stroke-width="0.9"/>
<path d="M495.8,229.8 L498.1,232.1 L495.8,234.4 L493.5,232.1 Z" fill="none" stroke="#D04030" stroke-width="0.9"/>
<path d="M520.6,151.3 L522.9,153.6 L520.6,155.9 L518.3,153.6 Z" fill="none" stroke="#D04030" stroke-width="0.9"/>
<path d="M559.6,166.5 L561.9,168.8 L559.6,171.1 L557.3,168.8 Z" fill="none" stroke="#D04030" stroke-width="0.9"/>
<path d="M589.0,244.2 L591.3,246.5 L589.0,248.8 L586.7,246.5 Z" fill="none" stroke="#D04030" stroke-width="0.9"/>
</g>
<rect x="69.5" y="314.5" width="3.5" height="3.5" fill="none" stroke="#28C828"/>
<text x="78" y="318.6">V(V1:+)</text>
<path d="M119,314 L121.2,316.2 L119,318.4 L116.8,316.2 Z" fill="none" stroke="#C83C30" stroke-width="0.9"/>
<text x="126" y="318.6">V(R1:2)</text>
</svg>

<!-- tab strip -->
<div class="a" style="left:83px;top:333px;width:1px;height:15px;background:#716F64"></div>
<div class="a" style="left:28.5px;top:333px;width:55px;height:14.5px;background:#ECE9D8;border-left:1px solid #fff;border-right:1px solid #716F64;border-bottom:1px solid #716F64"></div>
<svg class="ic" style="left:30px;top:336px" width="8" height="9" viewBox="0 0 8 9">
<rect width="8" height="9" fill="#1a1a1a"/><rect x="1" y="1" width="6" height="2.5" fill="#22B822"/><path d="M0.5,6 Q2,4 4,6 T7.5,5" stroke="#20C8D8" fill="none" stroke-width="1"/><path d="M0.5,8 Q2,6 4,7.5 T7.5,6.5" stroke="#D8D020" fill="none" stroke-width="0.9"/>
</svg>
<div class="t" style="left:39.6px;top:337.4px;font-size:7.4px;transform:scaleX(0.835)">rc_tiefpass-S...</div>

<!-- splitter -->
<div class="a" style="left:2px;top:350px;width:627px;height:1px;background:#fff"></div>

<!-- ===== BOTTOM LEFT PANE ===== -->
<div class="a" style="left:2px;top:352px;width:627px;height:1px;background:#A9A698"></div>
<div class="a" style="left:2px;top:353px;width:627px;height:1px;background:#8E8B80"></div>
<div class="a" style="left:2px;top:354px;width:627px;height:1px;background:#fff"></div>
<!-- dock buttons left -->
<div class="btn" style="left:5px;top:357px;width:6px;height:5.7px;border-right-color:#ACA899;border-bottom-color:#ACA899"></div>
<svg class="ic" style="left:5px;top:357px" width="6" height="6" viewBox="0 0 6 6"><path d="M1.5,1.5 L4.5,4.5 M4.5,1.5 L1.5,4.5" stroke="#000" stroke-width="1"/></svg>
<div class="btn" style="left:5px;top:362.7px;width:6px;height:7px;border-right-color:#ACA899;border-bottom-color:#ACA899"></div>
<svg class="ic" style="left:5px;top:363px" width="6" height="7" viewBox="0 0 6 7"><path d="M4,1.8 L1.8,3.5 L4,5.2 z" fill="#000"/></svg>
<div class="gv" style="left:6px;top:371px;height:57px"></div>
<div class="a" style="left:13px;top:355px;width:236px;height:73px;border-top:1px solid #ACA899;border-left:1px solid #ACA899;background:#fff"></div>
<div class="t" style="left:24px;top:357.6px;font-size:7.5px;line-height:8.42px;transform:scaleX(0.845)">Reading and checking circuit<br>Circuit read in and checked, no errors<br>Calculating bias point for Transient Analysis<br>Bias point calculated<br>Transient Analysis<br>Transient Analysis finished<br>Simulation complete</div>
<!-- v scrollbar -->
<div class="a" style="left:238.5px;top:357px;width:9px;height:61px;background:#F4F3EE"></div>
<div class="a" style="left:238.5px;top:357px;width:9px;height:9.5px;background:#C6D6FA;border:1px solid #E0E8FC;border-radius:1px"></div>
<svg class="ic" style="left:238.5px;top:357px" width="9" height="10" viewBox="0 0 9 10"><path d="M2,6 L4.5,3.5 L7,6" stroke="#4D6185" stroke-width="1.3" fill="none"/></svg>
<div class="a" style="left:238.5px;top:381px;width:9px;height:25px;background:#C4D4F8;border:1px solid #B8CCF6;border-radius:1px"></div>
<div class="a" style="left:241px;top:391px;width:4px;height:5px;border-top:1px solid #EEF2FD;border-bottom:1px solid #EEF2FD"></div>
<div class="a" style="left:238.5px;top:408px;width:9px;height:9.5px;background:#C6D6FA;border:1px solid #E0E8FC;border-radius:1px"></div>
<svg class="ic" style="left:238.5px;top:408px" width="9" height="10" viewBox="0 0 9 10"><path d="M2,3.5 L4.5,6 L7,3.5" stroke="#4D6185" stroke-width="1.3" fill="none"/></svg>
<!-- h scrollbar -->
<div class="a" style="left:14px;top:418px;width:224.5px;height:9.5px;background:#F4F3EE"></div>
<div class="a" style="left:14.5px;top:418px;width:9px;height:9.5px;background:#C6D6FA;border:1px solid #E0E8FC;border-radius:1px"></div>
<svg class="ic" style="left:14.5px;top:418px" width="9" height="10" viewBox="0 0 9 10"><path d="M5.5,2.5 L3,5 L5.5,7.5" stroke="#4D6185" stroke-width="1.3" fill="none"/></svg>
<div class="a" style="left:24.5px;top:418px;width:111px;height:9.5px;background:#C4D4F8;border:1px solid #B8CCF6;border-radius:1px"></div>
<div class="a" style="left:77.5px;top:420.5px;width:5px;height:4.5px;background:linear-gradient(90deg,#EEF3FE 0 1px,transparent 1px 2px,#EEF3FE 2px 3px,transparent 3px 4px,#EEF3FE 4px 5px)"></div>
<div class="a" style="left:228.5px;top:418px;width:9px;height:9.5px;background:#C6D6FA;border:1px solid #E0E8FC;border-radius:1px"></div>
<svg class="ic" style="left:228.5px;top:418px" width="9" height="10" viewBox="0 0 9 10"><path d="M3.5,2.5 L6,5 L3.5,7.5" stroke="#4D6185" stroke-width="1.3" fill="none"/></svg>
<div class="a" style="left:238.5px;top:418px;width:9px;height:9.5px;background:#ECE9D8"></div>
<div class="a" style="left:248px;top:355px;width:1px;height:73px;background:#D8D4C4"></div>
<!-- splitter vertical -->
<div class="a" style="left:255px;top:353px;width:1px;height:78px;background:#716F64"></div>
<div class="a" style="left:256px;top:353px;width:1px;height:78px;background:#fff"></div>

<!-- ===== BOTTOM RIGHT PANE ===== -->
<div class="btn" style="left:258px;top:357px;width:6.5px;height:5.7px;border-right-color:#ACA899;border-bottom-color:#ACA899"></div>
<svg class="ic" style="left:258px;top:357px" width="6" height="6" viewBox="0 0 6 6"><path d="M1.5,1.5 L4.5,4.5 M4.5,1.5 L1.5,4.5" stroke="#000" stroke-width="1"/></svg>
<div class="btn" style="left:258px;top:362.7px;width:6.5px;height:7px;border-right-color:#ACA899;border-bottom-color:#ACA899"></div>
<svg class="ic" style="left:258px;top:363px" width="6" height="7" viewBox="0 0 6 7"><path d="M4,1.8 L1.8,3.5 L4,5.2 z" fill="#000"/></svg>
<div class="gv" style="left:259.5px;top:371px;height:57px"></div>
<div class="a" style="left:266px;top:356px;width:361px;height:63px;border-top:1px solid #8E8B80;border-left:1px solid #8E8B80;box-shadow:inset 1px 1px 0 #FFFDF4"></div>
<div class="a" style="left:270px;top:359px;width:355px;height:57px;border-top:1px solid #8E8B80;border-left:1px solid #8E8B80;border-right:1px solid #F4F2EA;border-bottom:1px solid #F4F2EA;background:#fff"></div>
<div class="a" style="left:271px;top:360px;width:353px;height:10px;background:#ECE9D8;border-bottom:1px solid #CFCCBE;box-shadow:inset 1px 1px 0 #fff"></div>
<div class="a" style="left:317px;top:360px;width:1px;height:9px;background:#ACA899"></div>
<div class="a" style="left:318px;top:360px;width:1px;height:9px;background:#fff"></div>
<div class="a" style="left:467px;top:360px;width:1px;height:9px;background:#ACA899"></div>
<div class="a" style="left:468px;top:360px;width:1px;height:9px;background:#fff"></div>
<div class="t" style="left:273px;top:370.8px;font-size:7.5px;line-height:8.4px;transform:scaleX(0.85)">Capacitors:<br>Resistors:<br>Voltage Sour...</div>
<div class="t" style="left:322.5px;top:370.8px;font-size:7.5px;line-height:8.4px">1<br>1<br>1</div>
<!-- sheet tabs -->
<div class="a" style="left:267px;top:418px;width:117px;height:1px;background:#716F64"></div>
<div class="a" style="left:384px;top:418px;width:242px;height:1px;background:#716F64"></div>
<div class="btn" style="left:267.5px;top:419px;width:10px;height:9.5px;border-color:#fff #ACA899 #ACA899 #fff"></div>
<svg class="ic" style="left:267.5px;top:419px" width="10" height="10" viewBox="0 0 10 10"><path d="M6,2.5 L3.5,5 L6,7.5 z" fill="#9A988E"/></svg>
<div class="btn" style="left:277.5px;top:419px;width:10px;height:9.5px;border-color:#fff #ACA899 #ACA899 #fff"></div>
<svg class="ic" style="left:277.5px;top:419px" width="10" height="10" viewBox="0 0 10 10"><path d="M4,2.5 L6.5,5 L4,7.5 z" fill="#9A988E"/></svg>
<svg class="ic" style="left:286px;top:418px" width="100" height="11" viewBox="0 0 100 11">
<path d="M63,0 L66,10.5 L94,10.5 L97.5,0" fill="#fff" stroke="#000" stroke-width="0.9"/>
<path d="M2.5,0 L5.5,10.5 L33,10.5 L36.5,0" fill="none" stroke="#000" stroke-width="0.9"/>
<path d="M33.5,0 L36.5,10.5 L62,10.5 L65.5,0" fill="none" stroke="#000" stroke-width="0.9"/>
</svg>
<div class="t" style="left:294.3px;top:420.6px;font-size:7.5px;transform:scaleX(0.85)">Analysis</div>
<div class="t" style="left:326.5px;top:420.6px;font-size:7.5px;transform:scaleX(0.85)">Watch</div>
<div class="t" style="left:355px;top:420.6px;font-size:7.5px;transform:scaleX(0.85)">Devices</div>

<!-- ===== STATUS BAR ===== -->
<div class="a" style="left:2px;top:430px;width:627px;height:1px;background:#F8F6EC"></div>
<div class="a" style="left:2px;top:432px;width:627px;height:1px;background:#D8D5C6"></div>
<div class="a" style="left:2px;top:442px;width:627px;height:1px;background:#FFFCEE"></div>
<div class="sunk" style="left:2px;top:433.5px;width:405px;height:9.5px;border-color:#D0CDBE #fff #fff #D0CDBE"></div>
<div class="sunk" style="left:408px;top:433.5px;width:94px;height:9.5px;border-color:#ACA899 #fff #fff #ACA899"></div>
<div class="sunk" style="left:503px;top:433.5px;width:28px;height:9.5px;border-color:#ACA899 #fff #fff #ACA899"></div>
<div class="t" style="left:2.7px;top:435.2px;font-size:7.5px;transform:scaleX(0.843)">For Help, press F1</div>
<div class="t" style="left:409.1px;top:435.2px;font-size:7.5px;transform:scaleX(0.85)">Time= .1</div>
<div class="t" style="left:505.8px;top:435.2px;font-size:7.5px;transform:scaleX(0.85)">100%</div>
<div class="a" style="left:532px;top:434.5px;width:61px;height:8.5px;background:#F4F3EE;border:1px solid #ACA899"></div>
<div class="a" style="left:533.50px;top:435.5px;width:4.3px;height:6.5px;background:#316AC5"></div><div class="a" style="left:538.95px;top:435.5px;width:4.3px;height:6.5px;background:#316AC5"></div><div class="a" style="left:544.40px;top:435.5px;width:4.3px;height:6.5px;background:#316AC5"></div><div class="a" style="left:549.85px;top:435.5px;width:4.3px;height:6.5px;background:#316AC5"></div><div class="a" style="left:555.30px;top:435.5px;width:4.3px;height:6.5px;background:#316AC5"></div><div class="a" style="left:560.75px;top:435.5px;width:4.3px;height:6.5px;background:#316AC5"></div><div class="a" style="left:566.20px;top:435.5px;width:4.3px;height:6.5px;background:#316AC5"></div><div class="a" style="left:571.65px;top:435.5px;width:4.3px;height:6.5px;background:#316AC5"></div><div class="a" style="left:577.10px;top:435.5px;width:4.3px;height:6.5px;background:#316AC5"></div><div class="a" style="left:582.55px;top:435.5px;width:4.3px;height:6.5px;background:#316AC5"></div><div class="a" style="left:588.00px;top:435.5px;width:4.3px;height:6.5px;background:#316AC5"></div>
<div class="a" style="left:597px;top:434px;width:19.5px;height:9px;background:#000"></div>
<svg class="ic" style="left:597px;top:434px" width="20" height="9" viewBox="0 0 20 9"><path d="M0.5,5 L4,5 L6,7.5 L9,1.5 L11.5,6.5 L13.5,3 L15.5,5 L19.5,5" stroke="#18B8D8" stroke-width="1.2" fill="none"/></svg>
<svg class="ic" style="left:620px;top:434px" width="9" height="9" viewBox="0 0 9 9"><path d="M8,2 L2,8 M8,5 L5,8 M8,7.5 L7.5,8" stroke="#ACA899" stroke-width="1"/><path d="M8.5,2.5 L2.5,8.5 M8.5,5.5 L5.5,8.5" stroke="#fff" stroke-width="0.6"/></svg>
</body></html>
